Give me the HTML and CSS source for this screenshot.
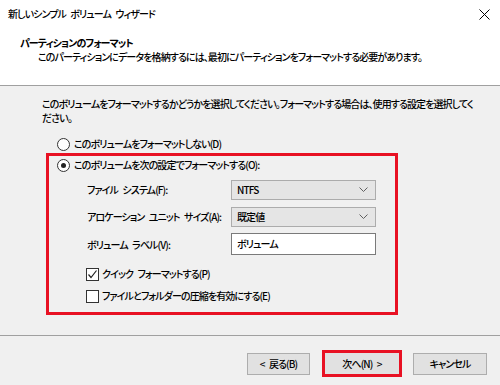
FILE: index.html
```html
<!DOCTYPE html>
<html lang="ja">
<head>
    <meta charset="UTF-8">
    <title>新しいシンプル ボリューム ウィザード</title>
    <link rel="stylesheet" href="styles.css">
</head>
<body>
    <div class="top">
        <div class="titlebar">
            <span>新しいシンプル ボリューム ウィザード</span>
            <svg class="close" width="11" height="11" viewBox="0 0 11 11"><path d="M0.5 0.5L10.5 10.5M10.5 0.5L0.5 10.5" stroke="#000" stroke-width="1" fill="none"/></svg>
        </div>
        <div class="head">
            <div class="head-title">パーティションのフォーマット</div>
            <div class="head-sub">このパーティションにデータを格納するには、最初にパーティションをフォーマットする必要があります。</div>
        </div>
    </div>

    <div class="main">
        <p class="intro">このボリュームをフォーマットするかどうかを選択してください。フォーマットする場合は、使用する設定を選択してください。</p>

        <label class="radio-row first"><span class="radio"></span>このボリュームをフォーマットしない(D)</label>

        <div class="highlight">
            <label class="radio-row"><span class="radio on"></span>このボリュームを次の設定でフォーマットする(O):</label>

            <div class="fields">
                <span class="field-label">ファイル システム(F):</span>
                <div class="combo">NTFS<svg width="9" height="6" viewBox="0 0 9 6"><path d="M0.5 0.5L4.5 4.5L8.5 0.5" stroke="#606060" fill="none"/></svg></div>

                <span class="field-label">アロケーション ユニット サイズ(A):</span>
                <div class="combo">既定値<svg width="9" height="6" viewBox="0 0 9 6"><path d="M0.5 0.5L4.5 4.5L8.5 0.5" stroke="#606060" fill="none"/></svg></div>

                <span class="field-label">ボリューム ラベル(V):</span>
                <div class="textbox">ボリューム</div>
            </div>

            <label class="check-row"><span class="check"><svg width="11" height="11" viewBox="0 0 11 11"><path d="M1.5 5.5L4 8.5L9.5 1.5" stroke="#222" stroke-width="1.2" fill="none"/></svg></span>クイック フォーマットする(P)</label>
            <label class="check-row"><span class="check"></span>ファイルとフォルダーの圧縮を有効にする(E)</label>
        </div>
    </div>

    <div class="footer">
        <button class="btn back">&lt; 戻る(B)</button>
        <button class="btn next">次へ(N) &gt;</button>
        <button class="btn cancel">キャンセル</button>
    </div>
</body>
</html>
```

FILE: styles.css
```css
body { margin: 0; width: 500px; height: 385px; overflow: hidden; background: #f0f0f0; color: #000; font-family: "Noto Sans CJK JP", "Noto Sans", sans-serif; font-size: 10px; font-weight: 500; line-height: 14px; letter-spacing: -0.9px; word-spacing: 3px; font-feature-settings: "palt"; }
.top { background: #fff; height: 86px; border-bottom: 1px solid #a0a0a0; box-sizing: border-box; }
.titlebar { height: 28px; display: flex; align-items: center; justify-content: space-between; padding: 0 10px 0 8px; }
.head { padding: 8px 20px 0; }
.head-title { font-weight: bold; }
.head-sub { padding-left: 18px; }
.main { height: 250px; padding-top: 11px; border-bottom: 1px solid #a0a0a0; box-sizing: border-box; }
.intro { margin: 0 0 0 42px; width: 432px; }
.radio-row { display: flex; align-items: center; gap: 4px; }
.radio-row.first { margin: 12px 0 0 57px; }
.radio { width: 11px; height: 11px; border: 1px solid #333; border-radius: 50%; background: #fff; position: relative; }
.radio.on::after { content: ""; position: absolute; left: 3px; top: 3px; width: 5px; height: 5px; border-radius: 50%; background: #222; }
.highlight { margin: 2px 0 0 46px; width: 352px; height: 162px; border: 3px solid #e81123; box-sizing: border-box; padding: 2px 0 0 8px; }
.fields { display: grid; grid-template-columns: 144px 145px; row-gap: 7px; margin: 8px 0 0 30px; align-items: center; }
.combo { height: 20px; box-sizing: border-box; border: 1px solid #acacac; background: #e5e5e5; display: flex; align-items: center; justify-content: space-between; padding: 0 7px 0 5px; }
.textbox { height: 22px; box-sizing: border-box; border: 1px solid #7a7a7a; background: #fff; display: flex; align-items: center; padding: 0 5px; margin-top: -1px; }
.check-row { display: flex; align-items: center; gap: 3px; margin-left: 29px; margin-top: 8px; }
.fields + .check-row { margin-top: 12px; }
.check { width: 13px; height: 13px; box-sizing: border-box; border: 1px solid #333; background: #fff; display: flex; align-items: center; justify-content: center; }
.footer { display: flex; justify-content: flex-end; align-items: center; gap: 11px; padding: 14px 13px 0 0; }
.btn { font: inherit; letter-spacing: inherit; word-spacing: inherit; font-feature-settings: "palt"; color: #000; height: 22px; background: #e1e1e1; border: 1px solid #adadad; padding: 0; }
.back { width: 63px; margin-right: 1px; }
.next { width: 80px; height: 27px; border: 3px solid #e81123; }
.cancel { width: 74px; }
```
